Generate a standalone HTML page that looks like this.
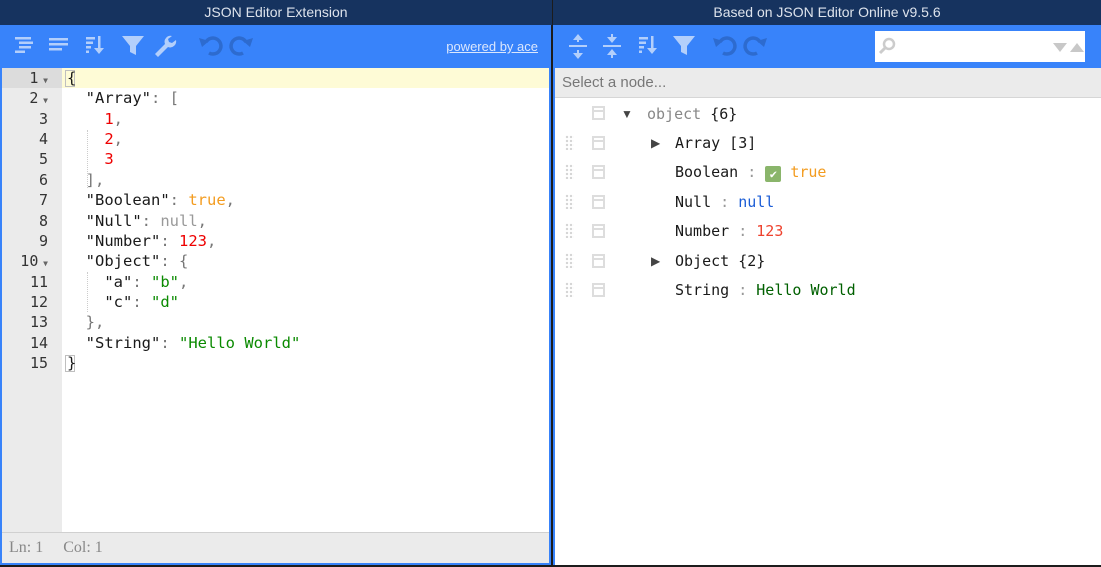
<!DOCTYPE html>
<html><head><style>
*{margin:0;padding:0;box-sizing:border-box}
body{width:1101px;height:567px;background:#1c1c1c;position:relative;overflow:hidden;font-family:"Liberation Sans",sans-serif}
.title{position:absolute;top:0;height:25px;background:#16335f;color:#dde3ec;font-size:14px;line-height:25px;text-align:center}
.panel{position:absolute;top:25px;background:#fff;border:2px solid #3883fa;border-top:none}
.tb{position:absolute;top:0;left:0;right:0;height:43px;background:#3883fa}
.mono{font-family:"DejaVu Sans Mono",monospace}
.gut{position:absolute;left:0;top:43px;width:60px;bottom:31px;background:#ebebeb}
.ln{position:absolute;left:0;width:48px;text-align:right;font-size:15px;color:#333;height:20.36px;line-height:20.36px}
.code{position:absolute;left:67px;font-size:15.5px;height:20.36px;line-height:20.36px;white-space:pre;color:#1a1a1a}
.p{color:#777}.n{color:#e00}.s{color:#0a8a00}.b{color:#f39c20}.nl{color:#999}
.row{position:absolute;font-size:15px;line-height:20px;white-space:pre;color:#1a1a1a}
.grip{position:absolute;width:9px;height:15px;background-image:radial-gradient(#d6d6d6 1.2px,transparent 1.3px);background-size:4px 4px}
.cb{position:absolute;width:13px;height:14px;border:2px solid #ddd}
.cb:after{content:"";position:absolute;left:0;right:0;top:2px;border-top:2px solid #ddd}
.tri{position:absolute;font-size:12px;color:#444}
</style></head><body>
<div class="title" style="left:0;width:552px">JSON Editor Extension</div>
<div class="title" style="left:553px;width:548px">Based on JSON Editor Online v9.5.6</div>

<div class="panel" style="left:0;width:551px;height:540px">
 <div class="tb">
  <svg width="260" height="43" style="position:absolute;left:0;top:0" fill="#b3cffb">
   <rect x="13" y="12" width="16" height="2.5"/><rect x="17" y="16.5" width="14" height="2.5"/><rect x="17" y="21" width="12" height="2.5"/><rect x="13" y="25.5" width="10" height="2.5"/>
   <rect x="47" y="13" width="19" height="2.5"/><rect x="47" y="18" width="19" height="2.5"/><rect x="47" y="23" width="13" height="2.5"/>
   <rect x="84" y="12" width="9" height="2.5"/><rect x="84" y="16.5" width="7" height="2.5"/><rect x="84" y="21" width="5" height="2.5"/><rect x="84" y="25.5" width="3" height="2.5"/><rect x="96" y="11" width="2.5" height="14"/><path d="M92 23h10l-5 6z"/>
   <path d="M120 11h22l-8 10v9l-6-3v-6z"/>
   <path d="M170 11a6 6 0 0 0-7 8l-10 10 3 3 10-10a6 6 0 0 0 8-7l-4 3-3-1-1-3z"/>
   <path d="M204 17a8 8 0 1 1 3 11" stroke="#2d6bcf" stroke-width="3.5" fill="none"/><path d="M197 13l3 9 7-6z" fill="#2d6bcf"/>
   <path d="M244 17a8 8 0 1 0 -3 11" stroke="#2d6bcf" stroke-width="3.5" fill="none"/><path d="M251 13l-3 9-7-6z" fill="#2d6bcf"/>
  </svg>
  <span style="position:absolute;right:11px;top:14px;font-size:13px;color:#dbe7fd;text-decoration:underline">powered by ace</span>
 </div>
 <div class="gut"></div>
 <div style="position:absolute;left:0;top:43px;width:60px;height:20.36px;background:#dcdcdc"></div>
 <div style="position:absolute;left:60px;right:0;top:43px;height:20.36px;background:#fefbd6"></div>
 <div style="position:absolute;left:0;right:0;bottom:0;height:31px;background:#ebebeb;border-top:1px solid #d0d0d0;font-family:'Liberation Serif',serif;font-size:16px;color:#888;line-height:30px;padding-left:7px;white-space:pre">Ln: 1     Col: 1</div>
</div>

<div style="position:absolute;left:65px;top:70px;width:10px;height:17px;border:1px solid #bfbfbf"></div>
<div style="position:absolute;left:65px;top:355px;width:10px;height:17px;border:1px solid #bfbfbf"></div>
<div style="position:absolute;left:87px;top:130px;height:58px;border-left:1px dotted #ccc"></div>
<div style="position:absolute;left:87px;top:272px;height:40px;border-left:1px dotted #ccc"></div>

<div class="panel" style="left:553px;width:548px;height:540px;border-right:none;border-bottom:none">
 <div class="tb">
  <svg width="240" height="43" style="position:absolute;left:0;top:0" fill="#b3cffb">
   <rect x="14" y="20" width="18" height="2"/><path d="M23 9l5 6h-10zM23 34l5-6h-10z"/><rect x="22" y="13" width="2" height="4"/><rect x="22" y="25" width="2" height="4"/>
   <rect x="48" y="20" width="18" height="2"/><path d="M57 18l5-6h-10zM57 24l5 6h-10z"/><rect x="56" y="9" width="2" height="4"/><rect x="56" y="29" width="2" height="4"/>
   <rect x="84" y="12" width="9" height="2.5"/><rect x="84" y="16.5" width="7" height="2.5"/><rect x="84" y="21" width="5" height="2.5"/><rect x="84" y="25.5" width="3" height="2.5"/><rect x="96" y="11" width="2.5" height="14"/><path d="M92 23h10l-5 6z"/>
   <path d="M118 11h22l-8 10v9l-6-3v-6z"/>
   <path d="M165 17a8 8 0 1 1 3 11" stroke="#2d6bcf" stroke-width="3.5" fill="none"/><path d="M158 13l3 9 7-6z" fill="#2d6bcf"/>
   <path d="M205 17a8 8 0 1 0 -3 11" stroke="#2d6bcf" stroke-width="3.5" fill="none"/><path d="M212 13l-3 9-7-6z" fill="#2d6bcf"/>
  </svg>
  <div style="position:absolute;left:320px;top:6px;width:210px;height:31px;background:#fff">
   <svg width="210" height="31" style="position:absolute;left:0;top:0"><circle cx="14" cy="13" r="5" stroke="#ccc" stroke-width="2.5" fill="none"/><path d="M10 17l-5 5" stroke="#ccc" stroke-width="3"/><path d="M178 12h14l-7 9z" fill="#c8c8c8"/><path d="M195 21h14l-7-9z" fill="#c8c8c8"/></svg>
  </div>
 </div>
 <div style="position:absolute;left:0;right:0;top:43px;height:30px;background:#ebebeb;border-bottom:1px solid #d6d6d6;font-size:15px;color:#777;line-height:30px;padding-left:7px">Select a node...</div>
</div>

<div class="cb" style="left:592px;top:106px"></div>
<div class="tri" style="left:621px;top:107px">▼</div>
<div class="row mono" style="left:647px;top:104px"><span style="color:#888">object</span> {6}</div>

<div class="grip" style="left:565px;top:135px"></div><div class="cb" style="left:592px;top:136px"></div><div class="tri" style="left:651px;top:136px">▶</div><div class="row mono" style="left:675px;top:133px">Array [3]</div>
<div class="grip" style="left:565px;top:164px"></div><div class="cb" style="left:592px;top:165px"></div><div class="row mono" style="left:675px;top:162px">Boolean<span style="color:#999"> : </span><span style="display:inline-block;width:16px;height:16px;background:#8ab56b;border-radius:2px;vertical-align:-1px;color:#fff;font-size:12px;line-height:16px;text-align:center">✔</span> <span class="b">true</span></div>
<div class="grip" style="left:565px;top:194px"></div><div class="cb" style="left:592px;top:195px"></div><div class="row mono" style="left:675px;top:192px">Null<span style="color:#999"> : </span><span style="color:#1a5cd6">null</span></div>
<div class="grip" style="left:565px;top:223px"></div><div class="cb" style="left:592px;top:224px"></div><div class="row mono" style="left:675px;top:221px">Number<span style="color:#999"> : </span><span style="color:#ee422e">123</span></div>
<div class="grip" style="left:565px;top:253px"></div><div class="cb" style="left:592px;top:254px"></div><div class="tri" style="left:651px;top:254px">▶</div><div class="row mono" style="left:675px;top:251px">Object {2}</div>
<div class="grip" style="left:565px;top:282px"></div><div class="cb" style="left:592px;top:283px"></div><div class="row mono" style="left:675px;top:280px">String<span style="color:#999"> : </span><span style="color:#006000">Hello World</span></div>

<div style="position:absolute;left:0;top:68px">
<div class="ln mono" style="top:0">1<span style="font-size:8px;color:#666"> ▼</span></div>
<div class="ln mono" style="top:20.36px">2<span style="font-size:8px;color:#666"> ▼</span></div>
<div class="ln mono" style="top:40.72px">3</div>
<div class="ln mono" style="top:61.08px">4</div>
<div class="ln mono" style="top:81.44px">5</div>
<div class="ln mono" style="top:101.8px">6</div>
<div class="ln mono" style="top:122.16px">7</div>
<div class="ln mono" style="top:142.52px">8</div>
<div class="ln mono" style="top:162.88px">9</div>
<div class="ln mono" style="top:183.24px">10<span style="font-size:8px;color:#666"> ▼</span></div>
<div class="ln mono" style="top:203.6px">11</div>
<div class="ln mono" style="top:223.96px">12</div>
<div class="ln mono" style="top:244.32px">13</div>
<div class="ln mono" style="top:264.68px">14</div>
<div class="ln mono" style="top:285.04px">15</div>
<div class="code mono" style="top:0">{</div>
<div class="code mono" style="top:20.36px">  "Array"<span class="p">: [</span></div>
<div class="code mono" style="top:40.72px">    <span class="n">1</span><span class="p">,</span></div>
<div class="code mono" style="top:61.08px">    <span class="n">2</span><span class="p">,</span></div>
<div class="code mono" style="top:81.44px">    <span class="n">3</span></div>
<div class="code mono" style="top:101.8px"><span class="p">  ],</span></div>
<div class="code mono" style="top:122.16px">  "Boolean"<span class="p">: </span><span class="b">true</span><span class="p">,</span></div>
<div class="code mono" style="top:142.52px">  "Null"<span class="p">: </span><span class="nl">null</span><span class="p">,</span></div>
<div class="code mono" style="top:162.88px">  "Number"<span class="p">: </span><span class="n">123</span><span class="p">,</span></div>
<div class="code mono" style="top:183.24px">  "Object"<span class="p">: {</span></div>
<div class="code mono" style="top:203.6px">    "a"<span class="p">: </span><span class="s">"b"</span><span class="p">,</span></div>
<div class="code mono" style="top:223.96px">    "c"<span class="p">: </span><span class="s">"d"</span></div>
<div class="code mono" style="top:244.32px"><span class="p">  },</span></div>
<div class="code mono" style="top:264.68px">  "String"<span class="p">: </span><span class="s">"Hello World"</span></div>
<div class="code mono" style="top:285.04px">}</div>
</div>
</body></html>
